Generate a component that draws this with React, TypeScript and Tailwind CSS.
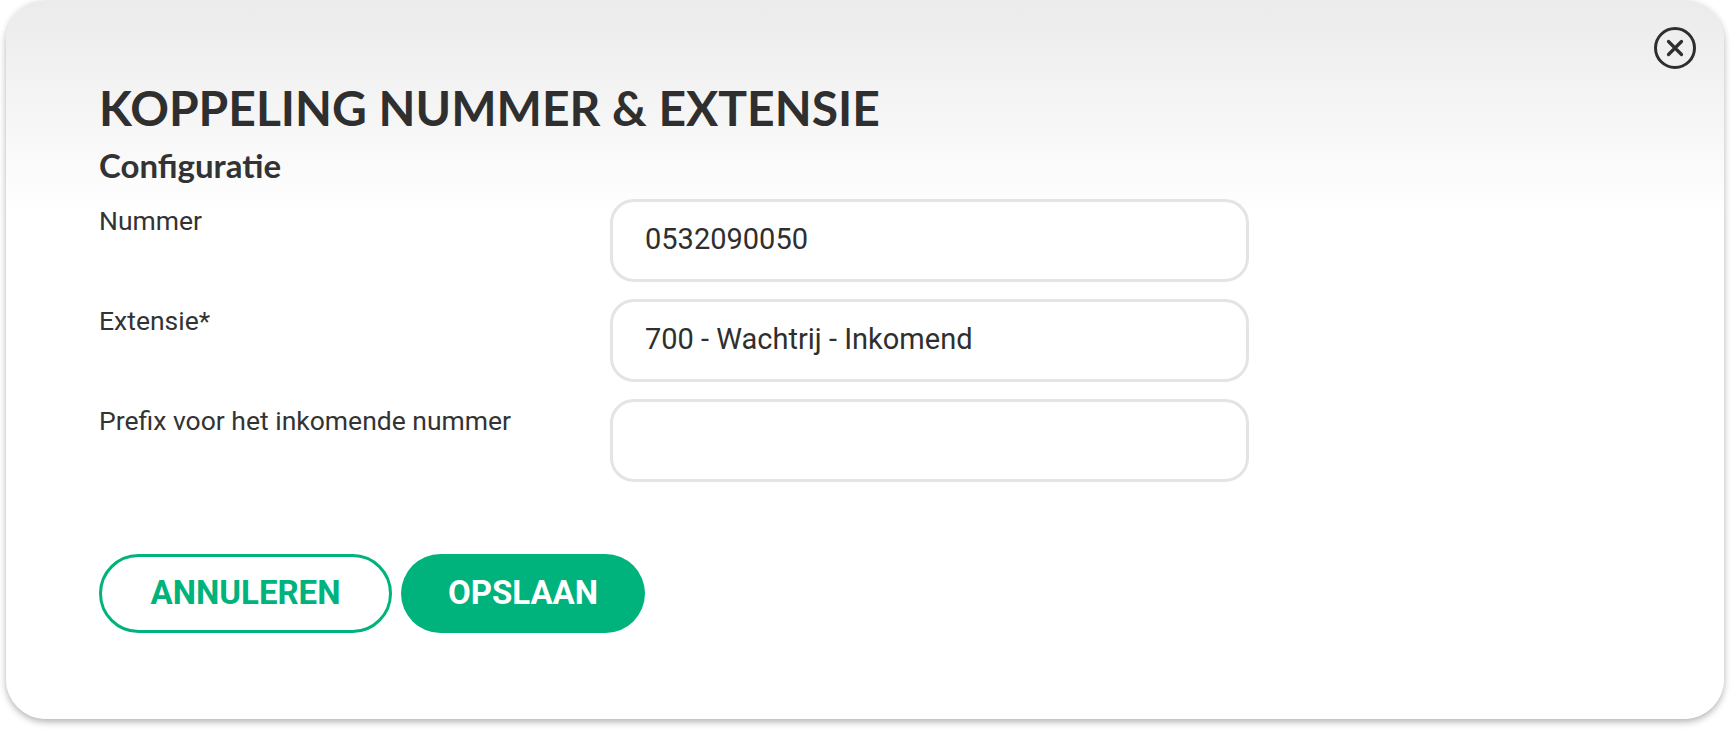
const fields = [
  { label: "Nummer", value: "0532090050" },
  { label: "Extensie*", value: "700 - Wachtrij - Inkomend" },
  { label: "Prefix voor het inkomende nummer", value: "" },
];

const CloseIcon = () => (
  <svg width="44" height="44" viewBox="0 0 44 44" fill="none">
    <circle cx="22" cy="22" r="19.5" stroke="#2f2f2f" strokeWidth="3" />
    <path d="M15.5 15.5 L28.5 28.5 M28.5 15.5 L15.5 28.5" stroke="#2f2f2f" strokeWidth="3.2" strokeLinecap="round" />
  </svg>
);

const App = () => {
  return (
    <div className="w-full h-[734px] bg-white pl-[6px] pr-[8px]">
      <div className="relative h-[719px] rounded-[40px] bg-linear-to-b from-[#ebebeb] to-white to-30% shadow-[0_3px_7px_rgba(0,0,0,0.3)] pl-[93px] pt-[79px]">
        <button className="absolute right-[27px] top-[26px]">
          <CloseIcon />
        </button>
        <h1 className="font-['Lato',sans-serif] font-bold text-[48px] leading-[1.2] text-[#2f2f2f]">
          KOPPELING NUMMER &amp; EXTENSIE
        </h1>
        <h2 className="mt-[9px] font-['Lato',sans-serif] font-bold text-[33px] leading-[38px] text-[#333]">
          Configuratie
        </h2>
        <div className="mt-[15px] flex flex-col gap-[17px]">
          {fields.map((f, idx) => (
            <div key={idx} className="flex">
              <div className="w-[511px] pt-[7px] font-['Roboto',sans-serif] text-[26.5px] leading-[30px] text-[#333]">
                {f.label}
              </div>
              <div className="w-[639px] h-[83px] rounded-[24px] border-[3px] border-[#e4e4e4] bg-white flex items-center px-[32px] font-['Roboto',sans-serif] text-[29px] text-[#2f2f2f]">
                {f.value}
              </div>
            </div>
          ))}
        </div>
        <div className="mt-[72px] flex gap-[9px]">
          <button className="w-[293px] h-[79px] rounded-full border-[3px] border-[#00b27b] bg-white font-['Roboto',sans-serif] font-bold text-[33px] text-[#00b27b]">
            ANNULEREN
          </button>
          <button className="w-[244px] h-[79px] rounded-full bg-[#00b27b] font-['Roboto',sans-serif] font-bold text-[33px] text-white">
            OPSLAAN
          </button>
        </div>
      </div>
    </div>
  );
};

export default App;
